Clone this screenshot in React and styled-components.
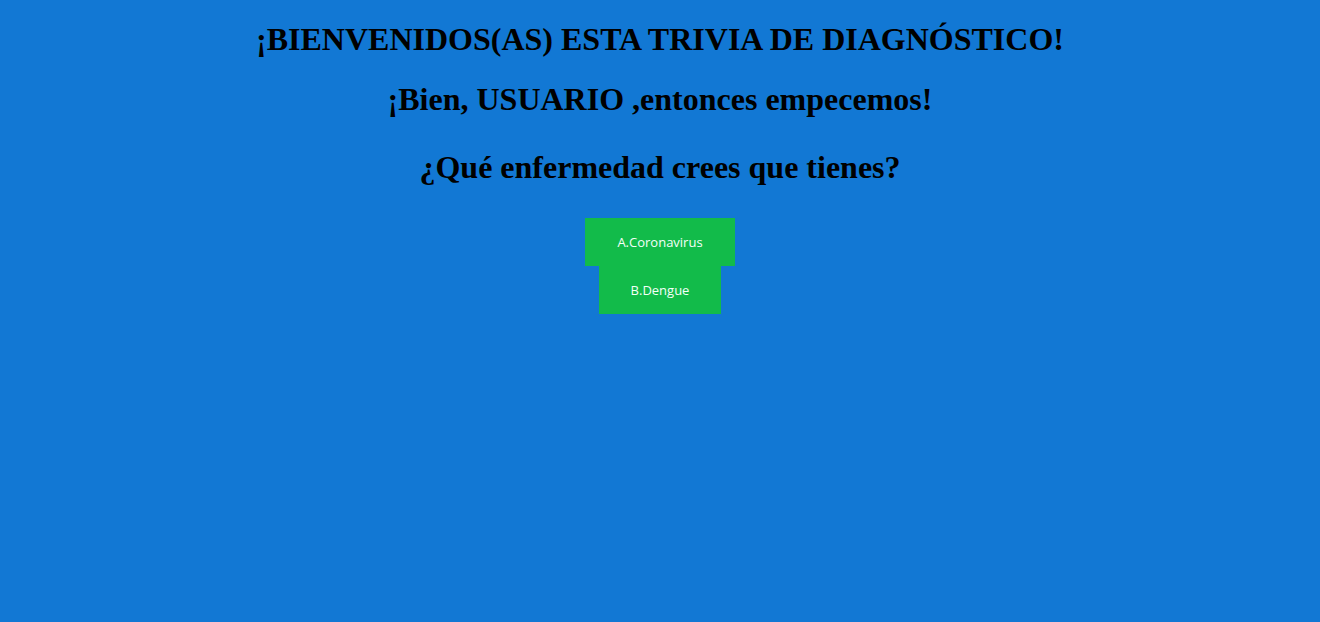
import React from "react";
import styled, { createGlobalStyle } from "styled-components";

const Global = createGlobalStyle`
  html, body { margin: 0; padding: 0; }
  body {
    background: #1278d4;
    min-height: 622px;
    font-family: "Liberation Serif", "Times New Roman", serif;
  }
`;

const Page = styled.main`
  display: block;
  text-align: center;
`;

const Title = styled.h1`
  margin: 21px 0 23px;
  font-size: 32px;
  font-weight: bold;
  color: #000;
  line-height: 37px;
`;

const Question = styled.h1`
  margin: 31px 0 32px;
  font-size: 32px;
  font-weight: bold;
  color: #000;
  line-height: 37px;
`;

const Options = styled.div`
  display: flex;
  flex-direction: column;
  align-items: center;
`;

const Option = styled.button`
  border: none;
  background: #12bb4a;
  color: #f4fff8;
  font-family: "Comic Sans MS", "Open Sans", sans-serif;
  font-size: 13px;
  padding: 15px 32px;
  line-height: 18px;
  cursor: pointer;
`;

export default function App() {
  return (
    <>
      <Global />
      <Page>
        <Title>¡BIENVENIDOS(AS) ESTA TRIVIA DE DIAGNÓSTICO!</Title>
        <Title>¡Bien, USUARIO ,entonces empecemos!</Title>
        <Question>¿Qué enfermedad crees que tienes?</Question>
        <Options>
          <Option>A.Coronavirus</Option>
          <Option>B.Dengue</Option>
        </Options>
      </Page>
    </>
  );
}
